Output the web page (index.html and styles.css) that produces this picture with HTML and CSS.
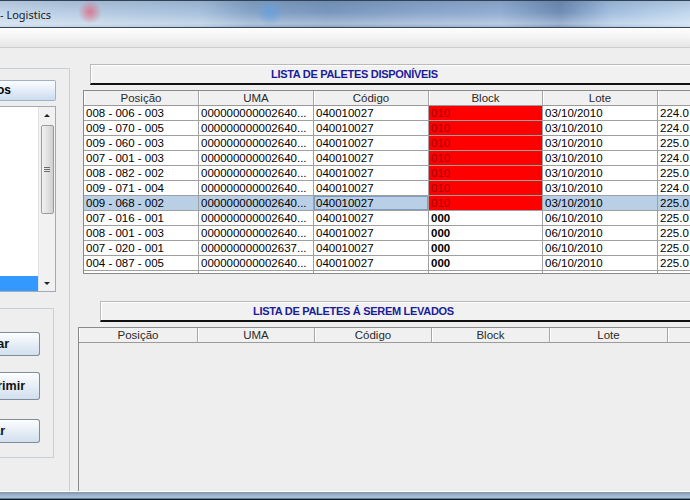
FILE: index.html
```html
<!DOCTYPE html>
<html lang="pt">
<head>
    <meta charset="UTF-8">
    <meta name="viewport" content="width=device-width, initial-scale=1.0">
    <title>Logistics</title>
    <link rel="stylesheet" href="styles.css">
</head>
<body>
<div class="window">
    <div class="titlebar"><span class="caption">- Logistics</span></div>
    <div class="menubar"></div>

    <div class="content">
        <div class="side">
            <div class="side-panel">
                <div class="side-header">Produtos</div>
                <div class="listbox">
                    <div class="list-items">
                        <div class="list-item selected"></div>
                    </div>
                    <div class="vscroll">
                        <span class="arrow up"></span>
                        <span class="thumb"><span class="grip"></span></span>
                        <span class="arrow down"></span>
                    </div>
                </div>
                <div class="actions">
                    <button class="action action-first">Adicionar</button>
                    <button class="action action-print">Imprimir</button>
                    <button class="action action-last">Cancelar</button>
                </div>
            </div>
        </div>

        <div class="lists">
            <div class="section-title first">LISTA DE PALETES DISPONÍVEIS</div>
            <div class="grid-pane available">
                <table class="grid grid-available">
                    <colgroup>
                        <col style="width:115px"><col style="width:115px"><col style="width:115px">
                        <col style="width:114px"><col style="width:115px"><col style="width:115px">
                    </colgroup>
                    <thead>
                        <tr><th>Posição</th><th>UMA</th><th>Código</th><th>Block</th><th>Lote</th><th>Peso</th></tr>
                    </thead>
                    <tbody>
                        <tr><td>008 - 006 - 003</td><td>000000000002640...</td><td>040010027</td><td class="blocked">010</td><td>03/10/2010</td><td>224.0</td></tr>
                        <tr><td>009 - 070 - 005</td><td>000000000002640...</td><td>040010027</td><td class="blocked">010</td><td>03/10/2010</td><td>224.0</td></tr>
                        <tr><td>009 - 060 - 003</td><td>000000000002640...</td><td>040010027</td><td class="blocked">010</td><td>03/10/2010</td><td>225.0</td></tr>
                        <tr><td>007 - 001 - 003</td><td>000000000002640...</td><td>040010027</td><td class="blocked">010</td><td>03/10/2010</td><td>224.0</td></tr>
                        <tr><td>008 - 082 - 002</td><td>000000000002640...</td><td>040010027</td><td class="blocked">010</td><td>03/10/2010</td><td>225.0</td></tr>
                        <tr><td>009 - 071 - 004</td><td>000000000002640...</td><td>040010027</td><td class="blocked">010</td><td>03/10/2010</td><td>224.0</td></tr>
                        <tr class="selected"><td>009 - 068 - 002</td><td>000000000002640...</td><td class="focused">040010027</td><td class="blocked">010</td><td>03/10/2010</td><td>225.0</td></tr>
                        <tr><td>007 - 016 - 001</td><td>000000000002640...</td><td>040010027</td><td class="free">000</td><td>06/10/2010</td><td>225.0</td></tr>
                        <tr><td>008 - 001 - 003</td><td>000000000002640...</td><td>040010027</td><td class="free">000</td><td>06/10/2010</td><td>225.0</td></tr>
                        <tr><td>007 - 020 - 001</td><td>000000000002637...</td><td>040010027</td><td class="free">000</td><td>06/10/2010</td><td>225.0</td></tr>
                        <tr><td>004 - 087 - 005</td><td>000000000002640...</td><td>040010027</td><td class="free">000</td><td>06/10/2010</td><td>225.0</td></tr>
                        <tr><td>008 - 003 - 001</td><td>000000000002640...</td><td>040010027</td><td class="free">000</td><td>06/10/2010</td><td>225.0</td></tr>
                    </tbody>
                </table>
            </div>

            <div class="section-title second">LISTA DE PALETES Á SEREM LEVADOS</div>
            <div class="grid-pane taken">
                <table class="grid grid-taken">
                    <colgroup>
                        <col style="width:119px"><col style="width:117px"><col style="width:117px">
                        <col style="width:118px"><col style="width:118px"><col style="width:118px">
                    </colgroup>
                    <thead>
                        <tr><th>Posição</th><th>UMA</th><th>Código</th><th>Block</th><th>Lote</th><th>Peso</th></tr>
                    </thead>
                    <tbody></tbody>
                </table>
            </div>
        </div>
    </div>

    <div class="statusbar"></div>
</div>
</body>
</html>
```

FILE: styles.css
```css
body {
    margin: 0;
    width: 690px;
    height: 500px;
    overflow: hidden;
    font-family: "Liberation Sans", Arial, sans-serif;
    background: #eeeeee;
}

.window {
    width: 780px;
    height: 500px;
    display: flex;
    flex-direction: column;
}

/* window chrome */

.titlebar {
    height: 26px;
    border-top: 1px solid #2f4256;
    border-bottom: 1px solid #3a4654;
    display: flex;
    align-items: center;
    background:
        radial-gradient(circle 12px at 90px 11px, rgba(226, 96, 118, 0.75), rgba(226, 96, 118, 0)),
        radial-gradient(circle 14px at 270px 11px, rgba(100, 160, 222, 0.8), rgba(100, 160, 222, 0)),
        linear-gradient(to bottom, rgba(30, 50, 80, 0.12), rgba(255, 255, 255, 0) 45%, rgba(255, 255, 255, 0.35) 88%, rgba(255, 255, 255, 0.1)),
        linear-gradient(90deg, #c4d7eb 0, #b9cee5 70px, #a8c1dd 200px, #86a4c8 250px, #7a98be 330px, #8aa6cb 420px, #92aed2 500px, #6f8db6 560px, #a3bfe0 610px, #c2d8ee 690px, #c8dcf0 780px);
}

.caption {
    font-family: "Noto Sans", "Open Sans", sans-serif;
    font-size: 11px;
    color: #1b1b1b;
    margin-top: 1px;
}

.menubar {
    height: 19px;
    border-bottom: 1px solid #cfcfcf;
    background: linear-gradient(to bottom, #fdfdfd, #f3f3f3 55%, #e5e5e5);
}

.content {
    flex: 1;
    display: flex;
    min-height: 0;
}

.statusbar {
    height: 8px;
    border-top: 1px solid #ffffff;
    background: linear-gradient(to bottom, #8594aa, #9fb6d2 45%, #aac4e2 75%, #1e2a38 88%, #111 100%);
}

/* left side */

.side {
    width: 70px;
    padding-top: 20px;
    display: flex;
    flex-direction: column;
}

.side-panel {
    flex: 1;
    border-top: 1px solid #c6d0da;
    border-right: 1px solid #c6d0da;
    display: flex;
    flex-direction: column;
    align-items: flex-end;
}

.side-header {
    margin-top: 11px;
    margin-right: 13px;
    width: 90px;
    height: 19px;
    line-height: 19px;
    border: 1px solid #9fb2c6;
    border-left: none;
    border-radius: 0 2px 2px 0;
    background: linear-gradient(to bottom, #fbfdff, #e3edf8 50%, #cbdcee);
    font-size: 12px;
    font-weight: bold;
    text-align: right;
    padding-right: 44px;
    box-sizing: content-box;
}

.listbox {
    margin-top: 5px;
    margin-right: 13px;
    width: 60px;
    height: 184px;
    border: 1px solid #a0abb7;
    border-left: none;
    background: #fff;
    display: flex;
}

.list-items {
    flex: 1;
    display: flex;
    flex-direction: column;
    justify-content: flex-end;
}

.list-item {
    height: 15px;
}

.list-item.selected {
    background: #3399ff;
}

.vscroll {
    width: 16px;
    background: #f1f1f1;
    border-left: 1px solid #e2e2e2;
    display: flex;
    flex-direction: column;
    align-items: center;
}

.arrow {
    width: 0;
    height: 0;
    border-left: 3px solid transparent;
    border-right: 3px solid transparent;
}

.arrow.up {
    margin-top: 7px;
    border-bottom: 3px solid #222;
}

.arrow.down {
    margin-top: auto;
    margin-bottom: 6px;
    border-top: 3px solid #222;
}

.thumb {
    margin-top: 8px;
    width: 13px;
    height: 89px;
    box-sizing: border-box;
    border: 1px solid #9c9c9c;
    border-radius: 2px;
    background: linear-gradient(90deg, #f2f2f2, #dedede 60%, #cfcfcf);
    display: flex;
    align-items: center;
    justify-content: center;
}

.grip {
    width: 6px;
    height: 5px;
    background: repeating-linear-gradient(to bottom, #6e6e6e 0, #6e6e6e 1px, transparent 1px, transparent 2px);
}

.actions {
    margin-top: 16px;
    margin-right: 15px;
    width: 70px;
    height: 148px;
    border: 1px solid #c6d0da;
    border-left: none;
    display: flex;
    flex-direction: column;
    align-items: flex-end;
}

.action {
    margin-right: 13px;
    width: 90px;
    height: 24px;
    border: 1px solid #7f8c99;
    border-left: none;
    border-radius: 0 3px 3px 0;
    background: linear-gradient(to bottom, #fdfeff, #e8eff7 45%, #d2e0ee);
    font-family: "Liberation Sans", Arial, sans-serif;
    font-size: 12.5px;
    font-weight: bold;
    color: #111;
    text-align: right;
    padding: 0;
    white-space: nowrap;
    overflow: hidden;
}

.action-first {
    margin-top: 23px;
    padding-right: 30px;
}

.action-print {
    margin-top: 16px;
    height: 28px;
    padding-right: 14px;
}

.action-last {
    margin-top: 19px;
    padding-right: 34px;
}

/* right side */

.lists {
    flex: 1;
    display: flex;
    flex-direction: column;
    min-width: 0;
}

.section-title {
    height: 18px;
    line-height: 19px;
    border: 1px solid #b9b9b9;
    border-bottom: 2px solid #111;
    box-shadow: inset 1px 1px #fff;
    background: #f1f1f1;
    color: #1c1c9a;
    font-size: 11px;
    font-weight: bold;
    letter-spacing: -0.3px;
    white-space: nowrap;
}

.section-title.first {
    margin: 16px 0 0 20px;
    padding-left: 180px;
}

.section-title.second {
    margin: 27px 0 0 30px;
    padding-left: 152px;
}

.grid-pane {
    border: 1px solid #8a8a8a;
    border-right: none;
    background: #eeeeee;
    overflow: hidden;
}

.grid-pane.available {
    margin: 5px 0 0 13px;
    height: 182px;
}

.grid-pane.taken {
    margin: 5px 0 0 8px;
    flex: 1;
    border-bottom: none;
}

.grid {
    border-collapse: separate;
    border-spacing: 0;
    table-layout: fixed;
    font-size: 11.5px;
}

.grid-available {
    width: 689px;
}

.grid-taken {
    width: 707px;
}

.grid th {
    height: 14px;
    padding: 0;
    font-weight: normal;
    color: #2a2a2a;
    background: #f0f0f0;
    border-right: 1px solid #a6a6a6;
    border-bottom: 1px solid #9a9a9a;
    box-shadow: inset 1px 0 #ffffff;
    line-height: 14px;
    text-align: center;
}

.grid td {
    height: 14px;
    padding: 0 0 0 2px;
    line-height: 14px;
    background: #fff;
    color: #000;
    border-right: 1px solid #a0a0a0;
    border-bottom: 1px solid #a0a0a0;
    white-space: nowrap;
    overflow: hidden;
}

.grid tr.selected td {
    background: #b8cfe6;
}

.grid tr.selected td.focused {
    box-shadow: inset 0 0 0 1px #7d9cc6;
}

.grid td.blocked,
.grid tr.selected td.blocked {
    background: #ff0000;
    color: #a30000;
}

.grid td.free {
    font-weight: bold;
}
```
